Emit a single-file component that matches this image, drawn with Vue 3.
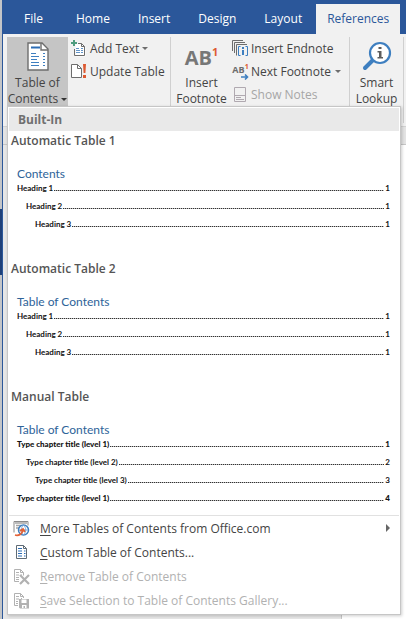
<template>
  <div class="screen">
    <div class="behind"><div class="behind-block"></div></div>
    <div class="window">
      <nav class="tabs">
        <button v-for="tab in tabs" :key="tab" class="tab" :class="{ active: tab === activeTab }" @click="activeTab = tab">
          {{ tab }}
        </button>
      </nav>

      <div class="ribbon">
        <div class="group group-toc">
          <button class="big-btn pressed" @click="menuOpen = !menuOpen">
            <svg width="22" height="30" viewBox="0 0 22 30">
              <path d="M1 2h14l6 6v21H1z" fill="#fff" stroke="#6d6d6d" stroke-width="1.4" />
              <path d="M14 2v7h7" fill="none" stroke="#6d6d6d" stroke-width="1.4" />
              <path d="M4 6.5h9" stroke="#2b6cb5" stroke-width="2" />
              <path d="M4 12.5h5M4 15.5h8M4 18.5h6M4 21.5h8M4 24.5h8M16 12.5h2M16 15.5h2M16 18.5h2M16 21.5h2M16 24.5h2" stroke="#3e7fc0" />
            </svg>
            <span>Table of<br />Contents <i class="caret dark"></i></span>
          </button>
          <div class="small-btns">
            <button class="small-btn">
              <svg width="16" height="17" viewBox="0 0 16 17">
                <path d="M4.500 3.500h6l4 4v9h-10z" fill="#fff" />
                <path d="M3.500 9v6.500h10V6.500l-3-3H7M10.500 3.500v3h3" fill="none" stroke="#6d6d6d" />
                <path d="M3 0v6M0 3h6" stroke="#4f9c7e" stroke-width="2" />
                <path d="M5 8.500h3M10 8.500h2M5 10.500h4M10 10.500h2M5 12.500h4M10 12.500h2" stroke="#6294c8" />
              </svg>
              <span>Add Text</span><i class="caret"></i>
            </button>
            <button class="small-btn">
              <svg width="16" height="17" viewBox="0 0 16 17">
                <path d="M.5 1.500h6l4 4v9H.5z" fill="#fff" stroke="#6d6d6d" />
                <path d="M6.500 1.500v4h4" fill="none" stroke="#6d6d6d" />
                <path d="M12 1h3l-.6 9h-1.800zM12 12h3v3h-3z" fill="#dd5a32" />
              </svg>
              <span>Update Table</span>
            </button>
          </div>
        </div>

        <div class="group group-notes">
          <button class="big-btn">
            <span class="ab">AB<sup>1</sup></span>
            <span>Insert<br />Footnote</span>
          </button>
          <div class="small-btns">
            <button class="small-btn">
              <svg width="17" height="17" viewBox="0 0 17 17">
                <path d="M.5 11V.5H11M2.500 13V2.500H13M4.500 15.500V4.500H15" fill="none" stroke="#6d6d6d" />
                <path d="M8.500 6.500h-2v9h2M13.500 6.500h2v9h-2" fill="none" stroke="#3e7fc0" />
                <path d="M11 7v2M11 10v5" stroke="#3e7fc0" stroke-width="2" />
              </svg>
              <span>Insert Endnote</span>
            </button>
            <button class="small-btn">
              <span class="ab-small">AB<sup>1</sup>
                <svg width="8" height="6" viewBox="0 0 8 6"><path d="M0 3h6M4 .5L6.500 3 4 5.500" fill="none" stroke="#3e7fc0" stroke-width="1.600" /></svg>
              </span>
              <span>Next Footnote</span><i class="caret far"></i>
            </button>
            <button class="small-btn" disabled>
              <svg width="17" height="17" viewBox="0 0 17 17">
                <path d="M2.500 1.500h11v14h-11zM2.500 9.500h11" fill="none" stroke="#b0a9b0" />
                <path d="M4 11.500h5M4 13.500h8" stroke="#b0a9b0" />
              </svg>
              <span>Show Notes</span>
            </button>
          </div>
        </div>

        <div class="group group-insights">
          <button class="big-btn">
            <svg width="30" height="30" viewBox="0 0 30 30">
              <path d="M3 27l8-8" stroke="#3e7fc0" stroke-width="4" stroke-linecap="round" />
              <circle cx="18" cy="12" r="10" fill="#fff" stroke="#3e7fc0" stroke-width="2.200" />
              <path d="M16.500 6h3v2h-3zM15.500 10h4v6h1.500v1.500h-5.500V16h1.500v-4.500h-1.500z" fill="#5c5c5c" />
            </svg>
            <span>Smart<br />Lookup</span>
          </button>
        </div>
      </div>

      <div class="ruler"></div>
      <div class="workspace"><div class="page"></div></div>

      <div v-if="menuOpen" class="menu">
        <h2 class="menu-head">Built-In</h2>
        <button v-for="item in gallery" :key="item.name" class="gallery-item">
          <span class="item-name">{{ item.name }}</span>
          <span class="preview">
            <span class="preview-title">{{ item.title }}</span>
            <span v-for="(row, i) in item.rows" :key="i" class="toc-row" :class="['level-' + row.level, item.kind]">
              <span>{{ row.text }}</span>
              <span class="leader"></span>
              <span>{{ row.page }}</span>
            </span>
          </span>
        </button>

        <div class="commands">
          <button class="command">
            <svg width="17" height="17" viewBox="0 0 17 17">
              <path d="M1 12.500V1.500h14v4" fill="none" stroke="#8a8a8a" />
              <path d="M2 3h12M3 5.500h5M3 8h3" stroke="#a5a5a5" stroke-width="1.400" />
              <circle cx="10.500" cy="10" r="5" fill="#fff" stroke="#3e7fc0" stroke-width="1.500" />
              <path d="M6 10h9M10.500 5c-3 3-3 7 0 10c3-3 3-7 0-10" fill="none" stroke="#7fabd8" />
              <path d="M2 15c4 1 7-1 8-5M7 11l3-2 2 3" fill="none" stroke="#e36237" stroke-width="1.800" />
            </svg>
            <span><u>M</u>ore Tables of Contents from Office.com</span>
            <i class="submenu"></i>
          </button>
          <button class="command">
            <svg width="17" height="17" viewBox="0 0 17 17">
              <path d="M3.500 1.500h7l3 3v10h-10z" fill="#fff" stroke="#5f6b75" />
              <path d="M10.500 1.500v3h3" fill="none" stroke="#5f6b75" />
              <path d="M5 4.500h4M5 7h4M5 9.500h4M5 12h4M11 7h1.500M11 9.500h1.500M11 12h1.500" stroke="#2b6cb5" stroke-width="1.200" />
            </svg>
            <span><u>C</u>ustom Table of Contents...</span>
          </button>
          <button class="command" disabled>
            <svg width="17" height="17" viewBox="0 0 17 17">
              <path d="M6 13.500H1.500V1.500h6l3 3v3M7.500 1.500v3h3M3 4.500h3M3 7h3M8 7h1M3 9.500h3M3 11.500h3" fill="none" stroke="#b1b1b1" />
              <path d="M7 7l9 9M16 7l-9 9" stroke="#b1b1b1" stroke-width="2.200" />
            </svg>
            <span><u>R</u>emove Table of Contents</span>
          </button>
          <button class="command" disabled>
            <svg width="17" height="17" viewBox="0 0 17 17">
              <path d="M5 13.500H1.500V1.500h6l3 3V6M7.500 1.500v3h3M3 4.500h3M3 7h3M8 6.500h1M3 9.500h2M3 11.500h2" fill="none" stroke="#b1b1b1" />
              <path d="M6 7h10v9.500H7L6 15.500z" fill="#b1b1b1" />
              <path d="M8.500 7.500h5V11h-5zM9 13h4.500v3H12v-2h-1.500v2H9z" fill="#fff" />
            </svg>
            <span><u>S</u>ave Selection to Table of Contents Gallery...</span>
          </button>
        </div>
      </div>
    </div>
  </div>
</template>

<script setup>
import { ref } from "vue";

const tabs = ["File", "Home", "Insert", "Design", "Layout", "References"];
const activeTab = ref("References");
const menuOpen = ref(true);

const headings = [
  { text: "Heading 1", page: 1, level: 1 },
  { text: "Heading 2", page: 1, level: 2 },
  { text: "Heading 3", page: 1, level: 3 },
];

const gallery = [
  { name: "Automatic Table 1", title: "Contents", kind: "auto", rows: headings },
  { name: "Automatic Table 2", title: "Table of Contents", kind: "auto", rows: headings },
  {
    name: "Manual Table",
    title: "Table of Contents",
    kind: "manual",
    rows: [
      { text: "Type chapter title (level 1)", page: 1, level: 1 },
      { text: "Type chapter title (level 2)", page: 2, level: 2 },
      { text: "Type chapter title (level 3)", page: 3, level: 3 },
      { text: "Type chapter title (level 1)", page: 4, level: 1 },
    ],
  },
];
</script>

<style>
body {
  margin: 0;
}
</style>

<style scoped>
.screen {
  display: flex;
  min-height: 100vh;
  font-family: "Open Sans", "Noto Sans", sans-serif;
  font-size: 12px;
  color: #444;
}

button {
  border: 0;
  padding: 0;
  margin: 0;
  background: none;
  font: inherit;
  color: inherit;
}

/* strip of the window underneath */
.behind {
  width: 2px;
  background: #c3c5c8;
}

.behind-block {
  height: 66px;
  margin-top: 209px;
  background: #1e4078;
}

.window {
  position: relative;
  flex: 1;
  min-width: 0;
  display: flex;
  flex-direction: column;
  border-left: 1px solid #2b579a;
}

.tabs {
  display: flex;
  align-items: flex-end;
  height: 34px;
  padding-left: 7px;
  background: #2b579a;
}

.tab {
  height: 30px;
  padding: 0 14px 1px;
  color: #fff;
}

.tab:first-child {
  margin-right: 5px;
}

.tab.active {
  padding: 0 11px 1px;
  background: #f1f1f1;
  color: #2b579a;
}

.ribbon {
  display: flex;
  height: 89px;
  padding: 3px 0 0 4px;
  background: #f1f1f1;
  border-bottom: 1px solid #d2d2d2;
}

.group {
  display: flex;
  height: 86px;
  box-sizing: border-box;
  border-right: 1px solid #d0d0d0;
}

.group-toc {
  width: 164px;
}

.group-notes {
  width: 179px;
}

.group-insights {
  width: 54px;
}

.big-btn {
  display: flex;
  flex-direction: column;
  align-items: center;
  justify-content: space-between;
  flex: none;
  width: 61px;
  height: 70px;
  padding-top: 4px;
  box-sizing: border-box;
  line-height: 16px;
}

.group-insights .big-btn {
  width: 53px;
}

.pressed {
  background: #c5c5c5;
}

.small-btns {
  display: flex;
  flex-direction: column;
  padding-left: 3px;
}

.group-notes .small-btns {
  padding-left: 0;
}

.small-btn {
  display: flex;
  align-items: center;
  gap: 3px;
  height: 23px;
  white-space: nowrap;
}

.group-notes .small-btn {
  gap: 2px;
}

.small-btn:disabled {
  color: #a6a6a6;
}

.caret {
  display: inline-block;
  border: 3px solid transparent;
  border-top-color: #6d6d6d;
  border-bottom: 0;
}

.caret.dark {
  border-top-color: #333;
  vertical-align: 2px;
}

.caret.far {
  margin-left: 2px;
}

.ab {
  padding-top: 5px;
  font: bold 20px/24px "Open Sans", "Noto Sans", sans-serif;
  color: #777;
}

.ab sup {
  font-size: 11px;
  line-height: 0;
  vertical-align: 9px;
  color: #dd5a32;
}

.ab-small {
  position: relative;
  width: 17px;
  font-size: 9px;
  font-weight: bold;
  line-height: 12px;
  padding-bottom: 4px;
  color: #6d6d6d;
}

.ab-small sup {
  font-size: 7px;
  line-height: 0;
  color: #dd5a32;
}

.ab-small svg {
  position: absolute;
  right: 0;
  bottom: 0;
}

.ruler {
  height: 17px;
  background: #e3e3e3;
  border-bottom: 1px solid #c6c6c6;
}

.workspace {
  flex: 1;
  display: flex;
  justify-content: flex-end;
  background: #e6e6e6;
}

.page {
  width: 64px;
  background: #fff;
  border-left: 1px solid #c6c6c6;
}

.menu {
  position: absolute;
  top: 106px;
  left: 4px;
  right: 5px;
  padding: 1px;
  background: #fff;
  border: 1px solid #c6c6c6;
  box-shadow: 1px 1px 3px rgba(0, 0, 0, 0.2);
}

.menu-head {
  margin: 0;
  padding-left: 9px;
  font-size: 12px;
  font-weight: bold;
  line-height: 23px;
  color: #707070;
  background: #e9e9e9;
}

.gallery-item {
  display: block;
  width: 100%;
  height: 128px;
  padding: 0 9px 0 2px;
  text-align: left;
}

.item-name {
  display: block;
  line-height: 20px;
  font-weight: 600;
  color: #555;
}

.preview {
  display: block;
  height: 108px;
  padding: 17px 0 0 6px;
  box-sizing: border-box;
  font-family: Lato, "Open Sans", sans-serif;
}

.preview-title {
  display: block;
  font-size: 12px;
  line-height: 11px;
  color: #2e6399;
}

.toc-row {
  display: flex;
  gap: 1px;
  font-size: 8px;
  font-weight: bold;
  line-height: 18px;
  color: #111;
}

.level-2 {
  padding-left: 9px;
}

.level-3 {
  padding-left: 18px;
}

.manual.level-1 {
  font-weight: 900;
}

.leader {
  flex: 1;
  height: 1px;
  margin-top: 11px;
  background: repeating-linear-gradient(to right, #333 0 1px, #bbb 1px 2px);
}

.commands {
  border-top: 1px solid #e1e1e1;
  padding-bottom: 1px;
}

.command {
  display: flex;
  align-items: center;
  gap: 10px;
  width: 100%;
  height: 24px;
  padding: 0 9px 0 4px;
  white-space: nowrap;
}

.command:disabled {
  color: #b1b1b1;
}

.command u {
  text-underline-offset: 2px;
}

.submenu {
  margin-left: auto;
  border: 4px solid transparent;
  border-left-color: #666;
  border-right: 0;
}
</style>
